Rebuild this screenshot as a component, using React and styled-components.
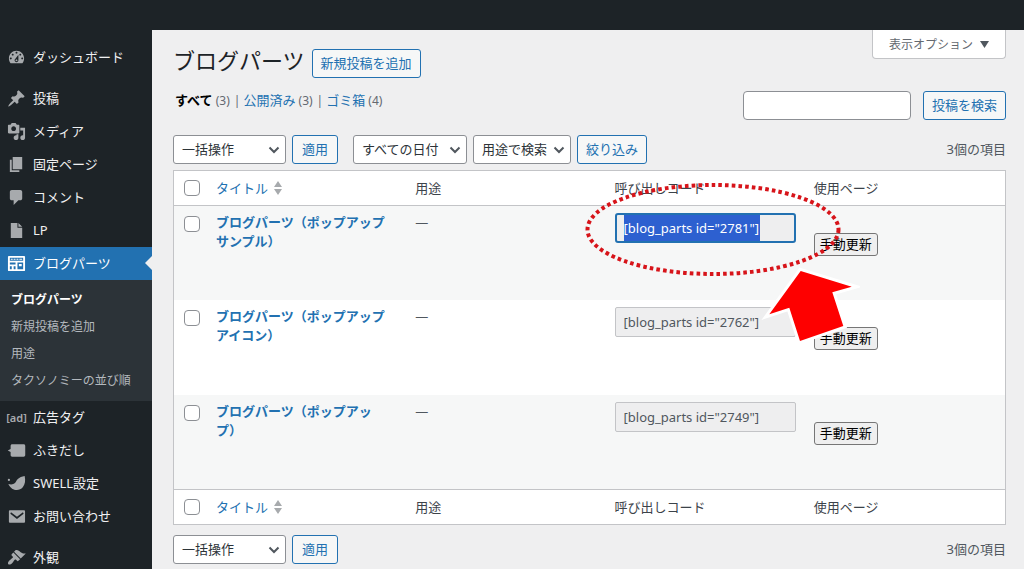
import React, { useEffect, useRef } from "react";
import styled, { createGlobalStyle, css } from "styled-components";

const GlobalStyle = createGlobalStyle`
  *, *::before, *::after { box-sizing: border-box; }
  body {
    margin: 0;
    background: #efeff0;
    color: #3c434a;
    font-family: "Noto Sans", "Noto Sans CJK JP", sans-serif;
    font-size: 13px;
    line-height: 19px;
  }
  button, input, select { font: inherit; margin: 0; }
  a { color: #2271b1; text-decoration: none; }
`;

const Shell = styled.div`
  display: flex;
  flex-direction: column;
  height: 100vh;
`;

const AdminBar = styled.header`
  flex: none;
  height: 30px;
  background: #1d2327;
`;

const Body = styled.div`
  display: flex;
  flex: 1;
  min-height: 0;
`;

const Sidebar = styled.nav`
  flex: none;
  width: 152px;
  padding-top: 11px;
  background: #1d2327;
  overflow-y: auto;
  scrollbar-width: none;
`;

const Menu = styled.ul`
  list-style: none;
  margin: 0;
  padding: 0;
`;

const MenuItem = styled.li`
  margin-bottom: ${(p) => (p.$gap ? "8px" : "0")};
`;

const MenuLink = styled.a`
  position: relative;
  display: flex;
  align-items: center;
  gap: 7px;
  height: 33px;
  padding-left: 7px;
  color: ${(p) => (p.$current ? "#fff" : "#f0f0f1")};
  background: ${(p) => (p.$current ? "#2271b1" : "transparent")};
  white-space: nowrap;
  ${(p) =>
    p.$current &&
    css`
      &::after {
        content: "";
        position: absolute;
        right: 0;
        top: 9px;
        border: 7px solid transparent;
        border-left-width: 0;
        border-right-color: #efeff0;
      }
    `}
`;

const MenuIcon = styled.svg`
  flex: none;
  width: 19px;
  height: 19px;
  fill: ${(p) => (p.$current ? "#fff" : "#a7aaad")};
`;

const AdMark = styled.span`
  flex: none;
  display: flex;
  justify-content: center;
  width: 19px;
  color: #a7aaad;
  font-size: 11px;
  font-weight: 600;
`;

const SubMenu = styled.ul`
  list-style: none;
  margin: 0;
  padding: 6px 0 7px;
  background: #2c3338;
`;

const SubLink = styled.a`
  display: block;
  padding-left: 11px;
  font-size: 12px;
  line-height: 27px;
  white-space: nowrap;
  color: ${(p) => (p.$current ? "#fff" : "#b4b9be")};
  font-weight: ${(p) => (p.$current ? 700 : 400)};
`;

const Main = styled.main`
  flex: 1;
  min-width: 0;
  padding: 0 18px 0 21px;
  overflow: hidden;
`;

const PageTop = styled.div`
  display: flex;
  justify-content: space-between;
  align-items: flex-start;
  padding-bottom: 15px;
`;

const TitleBlock = styled.div`
  padding-top: 19px;
`;

const TitleRow = styled.div`
  display: flex;
  align-items: flex-start;
  gap: 7px;
`;

const Title = styled.h1`
  margin: 0;
  font-size: 22px;
  font-weight: 400;
  line-height: 22px;
  color: #1d2327;
`;

const Views = styled.ul`
  display: flex;
  gap: 4px;
  list-style: none;
  margin: 0;
  padding: 13px 0 0 2px;
  color: #646970;
  font-size: 12px;

  li + li::before {
    content: "|";
    margin-right: 3px;
  }
`;

const ViewLink = styled.a`
  font-size: 13px;
  color: ${(p) => (p.$current ? "#000" : "#2271b1")};
  font-weight: ${(p) => (p.$current ? 700 : 400)};
`;

const TopRight = styled.div`
  display: flex;
  flex-direction: column;
  align-items: flex-end;
  gap: 32px;
`;

const ScreenOptions = styled.button`
  display: flex;
  align-items: center;
  gap: 7px;
  height: 29px;
  padding: 0 16px;
  border: 1px solid #c3c4c7;
  border-top: 0;
  border-radius: 0 0 4px 4px;
  background: #fff;
  color: #646970;
  font-size: 12px;

  svg { width: 9px; height: 7px; fill: #50575e; }
`;

const SearchForm = styled.form`
  display: flex;
  gap: 12px;
`;

const SearchInput = styled.input`
  width: 168px;
  height: 29px;
  padding: 0 8px;
  border: 1px solid #8c8f94;
  border-radius: 4px;
  background: #fff;
`;

const Button = styled.button`
  min-width: 46px;
  height: 29px;
  padding: 0 8px;
  border: 1px solid #2271b1;
  border-radius: 3px;
  background: #f6f7f7;
  color: #2271b1;
  white-space: nowrap;
`;

const Toolbar = styled.div`
  display: flex;
  align-items: center;
  padding: ${(p) => (p.$bottom ? "10px 0 0" : "0 0 6px")};
`;

const ToolGroup = styled.div`
  display: flex;
  gap: 6px;
  margin-right: 15px;
`;

const Count = styled.span`
  margin-left: auto;
  color: #50575e;
`;

const SelectBox = styled.div`
  display: grid;
  align-items: center;
  width: ${(p) => p.$width}px;

  > * { grid-area: 1 / 1; }
  svg {
    justify-self: end;
    width: 12px;
    height: 12px;
    margin-right: 6px;
    fill: none;
    stroke: #50575e;
    stroke-width: 2;
    pointer-events: none;
  }
`;

const Select = styled.select`
  appearance: none;
  width: 100%;
  height: 29px;
  padding: 0 18px 0 8px;
  border: 1px solid #8c8f94;
  border-radius: 3px;
  background: #fff;
  color: #2c3338;
`;

const Table = styled.table`
  width: 100%;
  table-layout: fixed;
  border: 1px solid #c3c4c7;
  border-spacing: 0;
  background: #fff;
`;

const HeadCell = styled.th`
  height: 35px;
  padding: 0 8px;
  border: 0 solid #c3c4c7;
  border-width: ${(p) => (p.$foot ? "1px 0 0" : "0 0 1px")};
  font-weight: 400;
  text-align: left;
  color: #3c434a;
`;

const CheckHead = styled(HeadCell)`
  width: 34px;
  padding: 0 0 0 10px;
`;

const SortLink = styled.a`
  display: inline-flex;
  align-items: center;
  gap: 6px;

  svg { width: 8px; height: 14px; fill: #a7aaad; }
`;

const Row = styled.tr`
  height: ${(p) => (p.$striped ? "94px" : "95px")};
  background: ${(p) => (p.$striped ? "#f6f7f7" : "#fff")};
`;

const Cell = styled.td`
  position: relative;
  padding: ${(p) => p.$top || 7}px 8px 0;
  vertical-align: top;
  color: #50575e;
`;

const CheckCell = styled.td`
  padding: 10px 0 0 10px;
  vertical-align: top;
`;

const Checkbox = styled.input`
  appearance: none;
  display: block;
  width: 16px;
  height: 16px;
  border: 1px solid #8c8f94;
  border-radius: 4px;
  background: #fff;
`;

const RowTitle = styled.a`
  display: block;
  padding-right: 12px;
  font-weight: 700;
`;

const CodeInput = styled.input`
  display: block;
  width: 99%;
  height: 30px;
  padding: 0 8px;
  border: 1px solid #c3c4c7;
  border-radius: 2px;
  background: #eeeeef;
  color: #50575e;
  outline: 0;

  &:focus {
    border: 2px solid #2271b1;
    border-radius: 3px;
    padding: 0 7px;
    background: linear-gradient(#2d60d0, #2d60d0) 7px 0 / 136px 26px no-repeat #eeeeef;
  }
  &::selection {
    background: #2d60d0;
    color: #fff;
  }
`;

const UpdateButton = styled.button`
  display: block;
  height: 23px;
  padding: 0 5px;
  border: 1px solid #767676;
  border-radius: 3px;
  background: #efefef;
  color: #000;
  line-height: 19px;
  white-space: nowrap;
`;

const Callout = styled.svg`
  position: absolute;
  left: -27px;
  top: -26px;
  width: 280px;
  height: 170px;
  z-index: 1;
  pointer-events: none;
`;

const shapes = {
  dashboard: (
    <path d="M3.76 16h12.48c1.1-1.37 1.76-3.11 1.76-5 0-4.42-3.58-8-8-8s-8 3.58-8 8c0 1.89.66 3.63 1.76 5zM10 4c.55 0 1 .45 1 1s-.45 1-1 1-1-.45-1-1 .45-1 1-1zM6 6c.55 0 1 .45 1 1s-.45 1-1 1-1-.45-1-1 .45-1 1-1zm8 0c.55 0 1 .45 1 1s-.45 1-1 1-1-.45-1-1 .45-1 1-1zm-5.37 5.55L12 7v6c0 1.1-.9 2-2 2s-2-.9-2-2c0-.57.24-1.08.63-1.45zM4 10c.55 0 1 .45 1 1s-.45 1-1 1-1-.45-1-1 .45-1 1-1zm12 0c.55 0 1 .45 1 1s-.45 1-1 1-1-.45-1-1 .45-1 1-1zm-5 3c0-.55-.45-1-1-1s-1 .45-1 1 .45 1 1 1 1-.45 1-1z" />
  ),
  pin: (
    <path d="M10.44 3.02l1.82-1.82 6.36 6.35-1.83 1.82c-1.05-.68-2.48-.57-3.41.36l-.75.75c-.92.93-1.04 2.35-.35 3.41l-1.83 1.82-2.41-2.41-2.8 2.79c-.42.42-3.38 2.71-3.8 2.29s1.86-3.39 2.28-3.81l2.79-2.79L4.1 9.36l1.83-1.82c1.05.69 2.48.57 3.4-.36l.75-.75c.93-.92 1.05-2.35.36-3.41z" />
  ),
  media: (
    <path d="M13 11V4c0-.55-.45-1-1-1h-1.67L9 1H5L3.67 3H2c-.55 0-1 .45-1 1v7c0 .55.45 1 1 1h10c.55 0 1-.45 1-1zM7 4.5c1.38 0 2.5 1.12 2.5 2.5S8.38 9.5 7 9.5 4.5 8.38 4.5 7 5.62 4.5 7 4.5zM14 6h5v10.5c0 1.38-1.12 2.5-2.5 2.5S14 17.88 14 16.5s1.12-2.5 2.5-2.5c.17 0 .34.02.5.05V9h-3V6zm-4 8.05V13h2v3.5c0 1.38-1.12 2.5-2.5 2.5S7 17.88 7 16.5 8.12 14 9.5 14c.17 0 .34.02.5.05z" />
  ),
  pages: <path d="M6 15V2h10v13H6zm-1 1h8v2H3V5h2v11z" />,
  comment: (
    <path d="M5 2h9c1.1 0 2 .9 2 2v7c0 1.1-.9 2-2 2h-2l-5 5v-5H5c-1.1 0-2-.9-2-2V4c0-1.1.9-2 2-2z" />
  ),
  file: <path d="M4 2h7v5h5v11H4V2zm8 0l4 4h-4V2z" />,
  parts: (
    <path
      fillRule="evenodd"
      d="M2 2h16c.6 0 1 .4 1 1v14c0 .6-.4 1-1 1H2c-.6 0-1-.4-1-1V3c0-.6.4-1 1-1zm1 2v3h14V4H3zm1 1h2v1H4V5zm3 0h2v1H7V5zm3 0h2v1h-2V5zm3 0h3v1h-3V5zM3 9v2h6V9H3zm8 0v7h6V9h-6zm1.500 1.500h3v2.500h-3v-2.500zM3 13v3h2v-3H3zm4 0v3h2v-3H7z"
    />
  ),
  balloon: (
    <path d="M5.500 3.500h12c1 0 1.700.7 1.700 1.700v9.600c0 1-.7 1.700-1.700 1.700h-12c-1 0-1.700-.7-1.700-1.700v-3.100L.8 10l3-1.700V5.200c0-1 .7-1.700 1.700-1.700z" />
  ),
  swell: (
    <path d="M18.600 2.200c1 4.500.5 8.800-2 11.800-3.600 4.300-11.400 4.500-15.200-3.500 2.800.8 5.400.5 7-1 1.400-1.300 1.400-2.700 3-4.200 1.800-1.700 4.300-2.400 7.200-3.100zM2 5a1.200 1.200 0 1 1 0 2.400A1.200 1.200 0 0 1 2 5z" />
  ),
  mail: (
    <path
      fillRule="evenodd"
      d="M3 3.500h15c.6 0 1 .4 1 1v11c0 .6-.4 1-1 1H3c-.6 0-1-.4-1-1v-11c0-.6.4-1 1-1zm1.200 2L3.500 7l7 5.500 7-5.500-.7-1.500-6.300 4.800-6.300-4.800z"
    />
  ),
  brush: (
    <path d="M14.480 11.060L7.410 3.990l1.500-1.500c.5-.56 2.300-.47 3.510.32 1.210.8 1.430 1.280 2.910 2.100 1.180.64 2.450 1.260 4.450.85zm-.71.71L6.700 4.700 4.930 6.470c-.39.39-.39 1.020 0 1.410l1.060 1.060c.39.39.39 1.030 0 1.420-.6.6-1.430 1.110-2.210 1.690-.35.26-.7.53-1.010.84C1.430 14.230.4 16.080 1.400 17.070c.99 1 2.840-.03 4.180-1.360.31-.31.58-.66.85-1.020.57-.78 1.080-1.610 1.690-2.210.39-.39 1.020-.39 1.410 0l1.060 1.060c.39.39 1.020.39 1.410 0z" />
  ),
};

const menu = [
  { label: "ダッシュボード", icon: "dashboard", gap: true },
  { label: "投稿", icon: "pin" },
  { label: "メディア", icon: "media" },
  { label: "固定ページ", icon: "pages" },
  { label: "コメント", icon: "comment" },
  { label: "LP", icon: "file" },
  {
    label: "ブログパーツ",
    icon: "parts",
    current: true,
    children: ["ブログパーツ", "新規投稿を追加", "用途", "タクソノミーの並び順"],
  },
  { label: "広告タグ", icon: "ad" },
  { label: "ふきだし", icon: "balloon" },
  { label: "SWELL設定", icon: "swell" },
  { label: "お問い合わせ", icon: "mail", gap: true },
  { label: "外観", icon: "brush" },
];

const parts = [
  { id: 2781, title: "ブログパーツ（ポップアップサンプル）" },
  { id: 2762, title: "ブログパーツ（ポップアップアイコン）" },
  { id: 2749, title: "ブログパーツ（ポップアップ）" },
];

function Dropdown({ label, text, width }) {
  return (
    <SelectBox $width={width}>
      <Select aria-label={label}>
        <option>{text}</option>
      </Select>
      <svg viewBox="0 0 12 12" aria-hidden="true">
        <path d="M1.500 3.500L6 8l4.500-4.500" />
      </svg>
    </SelectBox>
  );
}

function HeaderRow({ foot }) {
  return (
    <tr>
      <CheckHead $foot={foot}>
        <Checkbox type="checkbox" aria-label="すべて選択" />
      </CheckHead>
      <HeadCell $foot={foot}>
        <SortLink href="#title">
          タイトル
          <svg viewBox="0 0 8 14" aria-hidden="true">
            <path d="M4 0l4 6H0zM4 14l4-6H0z" />
          </svg>
        </SortLink>
      </HeadCell>
      <HeadCell $foot={foot}>用途</HeadCell>
      <HeadCell $foot={foot}>呼び出しコード</HeadCell>
      <HeadCell $foot={foot}>使用ページ</HeadCell>
    </tr>
  );
}

function HighlightCallout() {
  return (
    <Callout viewBox="580 180 280 170" aria-hidden="true">
      <ellipse
        cx="713"
        cy="229.500"
        rx="125.500"
        ry="44.500"
        fill="none"
        stroke="#d7141a"
        strokeWidth="4"
        strokeDasharray="3.600 3.100"
      />
      <path
        d="M800.700 271L851.700 286.700 832.300 292.300 843.300 326 800 341 789.300 307.700 769.300 314.300z"
        fill="#fe0000"
        stroke="#fff"
        strokeWidth="6"
        paintOrder="stroke"
      />
    </Callout>
  );
}

export default function App() {
  const firstCode = useRef(null);

  useEffect(() => {
    firstCode.current.focus();
    firstCode.current.select();
  }, []);

  return (
    <>
      <GlobalStyle />
      <Shell>
        <AdminBar />
        <Body>
          <Sidebar>
            <Menu>
              {menu.map((item) => (
                <MenuItem key={item.label} $gap={item.gap}>
                  <MenuLink href="#menu" $current={item.current}>
                    {item.icon === "ad" ? (
                      <AdMark>[ad]</AdMark>
                    ) : (
                      <MenuIcon viewBox="0 0 20 20" aria-hidden="true" $current={item.current}>
                        {shapes[item.icon]}
                      </MenuIcon>
                    )}
                    {item.label}
                  </MenuLink>
                  {item.children && (
                    <SubMenu>
                      {item.children.map((child, i) => (
                        <li key={child}>
                          <SubLink href="#submenu" $current={i === 0}>
                            {child}
                          </SubLink>
                        </li>
                      ))}
                    </SubMenu>
                  )}
                </MenuItem>
              ))}
            </Menu>
          </Sidebar>
          <Main>
            <PageTop>
              <TitleBlock>
                <TitleRow>
                  <Title>ブログパーツ</Title>
                  <Button type="button">新規投稿を追加</Button>
                </TitleRow>
                <Views>
                  <li>
                    <ViewLink href="#all" $current>すべて</ViewLink> (3)
                  </li>
                  <li>
                    <ViewLink href="#published">公開済み</ViewLink> (3)
                  </li>
                  <li>
                    <ViewLink href="#trash">ゴミ箱</ViewLink> (4)
                  </li>
                </Views>
              </TitleBlock>
              <TopRight>
                <ScreenOptions type="button">
                  表示オプション
                  <svg viewBox="0 0 9 7" aria-hidden="true">
                    <path d="M0 0h9L4.500 7z" />
                  </svg>
                </ScreenOptions>
                <SearchForm onSubmit={(e) => e.preventDefault()}>
                  <SearchInput type="search" aria-label="投稿を検索" />
                  <Button type="submit">投稿を検索</Button>
                </SearchForm>
              </TopRight>
            </PageTop>
            <Toolbar>
              <ToolGroup>
                <Dropdown label="一括操作を選択" text="一括操作" width={113} />
                <Button type="button">適用</Button>
              </ToolGroup>
              <ToolGroup>
                <Dropdown label="日付で絞り込む" text="すべての日付" width={114} />
                <Dropdown label="用途で絞り込む" text="用途で検索" width={98} />
                <Button type="button">絞り込み</Button>
              </ToolGroup>
              <Count>3個の項目</Count>
            </Toolbar>
            <Table>
              <thead>
                <HeaderRow />
              </thead>
              <tbody>
                {parts.map((part, i) => (
                  <Row key={part.id} $striped={i % 2 === 0}>
                    <CheckCell>
                      <Checkbox type="checkbox" aria-label={part.title} />
                    </CheckCell>
                    <Cell>
                      <RowTitle href="#edit">{part.title}</RowTitle>
                    </Cell>
                    <Cell>—</Cell>
                    <Cell>
                      <CodeInput
                        ref={i === 0 ? firstCode : null}
                        readOnly
                        aria-label="呼び出しコード"
                        value={`[blog_parts id="${part.id}"]`}
                      />
                      {i === 0 && <HighlightCallout />}
                    </Cell>
                    <Cell $top={27}>
                      <UpdateButton type="button">手動更新</UpdateButton>
                    </Cell>
                  </Row>
                ))}
              </tbody>
              <tfoot>
                <HeaderRow foot />
              </tfoot>
            </Table>
            <Toolbar $bottom>
              <ToolGroup>
                <Dropdown label="一括操作を選択" text="一括操作" width={113} />
                <Button type="button">適用</Button>
              </ToolGroup>
              <Count>3個の項目</Count>
            </Toolbar>
          </Main>
        </Body>
      </Shell>
    </>
  );
}
